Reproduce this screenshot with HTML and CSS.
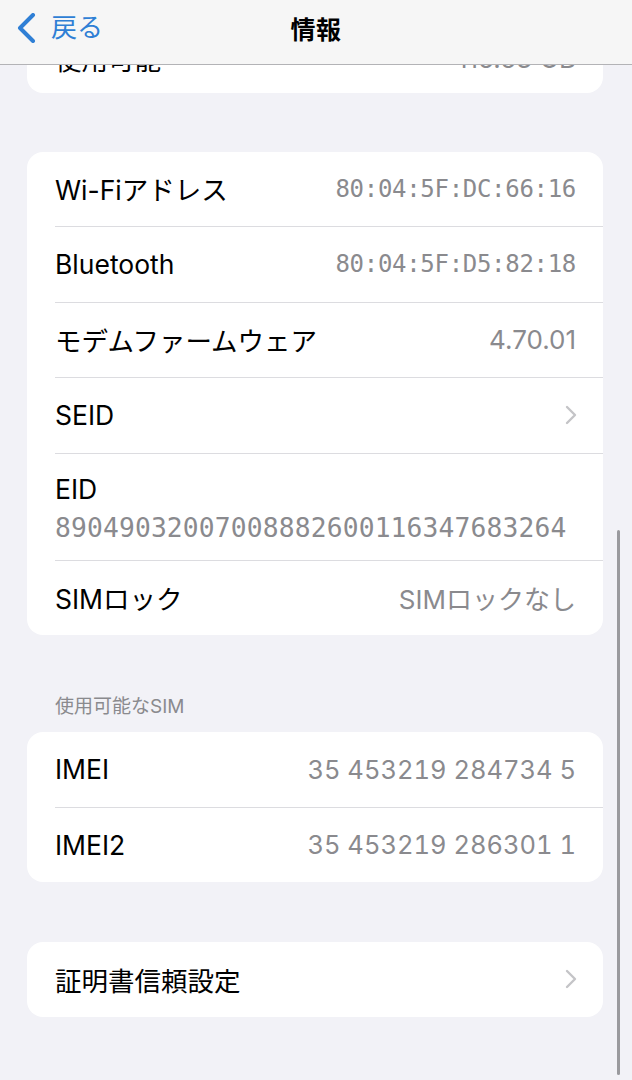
FILE: index.html
```html
<!DOCTYPE html>
<html lang="ja">
<head>
  <meta charset="UTF-8" />
  <meta name="viewport" content="width=device-width, initial-scale=1.0"/>
  <title>情報</title>
  <link rel="stylesheet" href="styles.css">
</head>
<body>
  <header class="navbar">
    <a class="back">
      <svg class="back-icon" width="22" height="30" viewBox="0 0 22 30">
        <path d="M18 2 L5 15 L18 28" fill="none" stroke="currentColor" stroke-width="4" stroke-linecap="round" stroke-linejoin="round"/>
      </svg>
      <span>戻る</span>
    </a>
    <h1 class="title">情報</h1>
  </header>

  <main class="list">
    <section class="card card-first">
      <div class="row">
        <span class="label">使用可能</span>
        <span class="value">115.63 GB</span>
      </div>
    </section>

    <section class="card">
      <div class="row">
        <span class="label">Wi-Fiアドレス</span>
        <span class="value mono">80:04:5F:DC:66:16</span>
      </div>
      <div class="row">
        <span class="label">Bluetooth</span>
        <span class="value mono">80:04:5F:D5:82:18</span>
      </div>
      <div class="row">
        <span class="label">モデムファームウェア</span>
        <span class="value">4.70.01</span>
      </div>
      <div class="row">
        <span class="label">SEID</span>
        <svg class="chevron" width="14" height="20" viewBox="0 0 14 20">
          <path d="M3 2 L11 10 L3 18" fill="none" stroke="currentColor" stroke-width="2.4" stroke-linecap="round" stroke-linejoin="round"/>
        </svg>
      </div>
      <div class="row row-stack">
        <span class="label">EID</span>
        <span class="value eid">89049032007008882600116347683264</span>
      </div>
      <div class="row">
        <span class="label">SIMロック</span>
        <span class="value">SIMロックなし</span>
      </div>
    </section>

    <h2 class="section-title">使用可能なSIM</h2>
    <section class="card">
      <div class="row">
        <span class="label">IMEI</span>
        <span class="value imei">35 453219 284734 5</span>
      </div>
      <div class="row">
        <span class="label">IMEI2</span>
        <span class="value imei">35 453219 286301 1</span>
      </div>
    </section>

    <section class="card card-last">
      <div class="row">
        <span class="label">証明書信頼設定</span>
        <svg class="chevron" width="14" height="20" viewBox="0 0 14 20">
          <path d="M3 2 L11 10 L3 18" fill="none" stroke="currentColor" stroke-width="2.4" stroke-linecap="round" stroke-linejoin="round"/>
        </svg>
      </div>
    </section>
  </main>

  <div class="scroll-indicator"></div>
</body>
</html>
```

FILE: styles.css
```css
body {
  margin: 0;
  background: #f2f2f7;
  font-family: 'Inter', 'Noto Sans CJK JP', sans-serif;
  color: #000;
  -webkit-font-smoothing: antialiased;
}

.navbar {
  position: fixed;
  top: 0;
  left: 0;
  right: 0;
  height: 65px;
  padding-bottom: 8px;
  box-sizing: border-box;
  z-index: 10;
  background: #f6f6f6;
  border-bottom: 1px solid #b3b3b6;
  display: flex;
  align-items: center;
  justify-content: center;
}

.back {
  position: absolute;
  left: 15px;
  top: 13px;
  display: flex;
  align-items: center;
  gap: 14px;
  color: #2f7fd5;
  font-size: 26px;
  line-height: 30px;
}

.back-icon {
  display: block;
}

.title {
  margin: 0;
  font-size: 25px;
  font-weight: 700;
  letter-spacing: 0.5px;
}

.list {
  padding: 18px 29px 40px 27px;
}

.card {
  background: #fff;
  border-radius: 16px;
  overflow: hidden;
  margin-bottom: 60px;
}

.card-first {
  margin-bottom: 59px;
}

.card-first .row {
  padding-top: 6px;
}

.card-last {
  margin-bottom: 0;
}

.row {
  min-height: 75.5px;
  margin-left: 28px;
  padding-right: 27px;
  display: flex;
  align-items: center;
  justify-content: space-between;
  border-bottom: 1px solid #dcdce0;
  box-sizing: border-box;
}

.row:last-child {
  min-height: 74.5px;
  border-bottom: none;
}

.label {
  font-size: 26.5px;
}

.value {
  font-size: 26px;
  color: #8a8a8e;
}

.mono {
  font-family: 'DejaVu Sans Mono', monospace;
  font-size: 24px;
  letter-spacing: -0.3px;
}

.imei {
  font-size: 25.5px;
  font-variant-numeric: tabular-nums;
}

.row-stack {
  flex-direction: column;
  align-items: flex-start;
  justify-content: center;
  min-height: 107px;
  gap: 8px;
  padding-top: 2px;
}

.eid {
  font-family: 'DejaVu Sans Mono', monospace;
  font-size: 26.3px;
  letter-spacing: 0.15px;
}

.chevron {
  color: #c4c4c7;
  display: block;
  margin-right: -2px;
}

.section-title {
  margin: 0 0 13px 28px;
  font-size: 19px;
  font-weight: 400;
  color: #8a8a8e;
  line-height: 24px;
}

.scroll-indicator {
  position: fixed;
  right: 12px;
  top: 530px;
  bottom: 5px;
  width: 3px;
  border-radius: 2px;
  background: #9a9a9e;
}
```
